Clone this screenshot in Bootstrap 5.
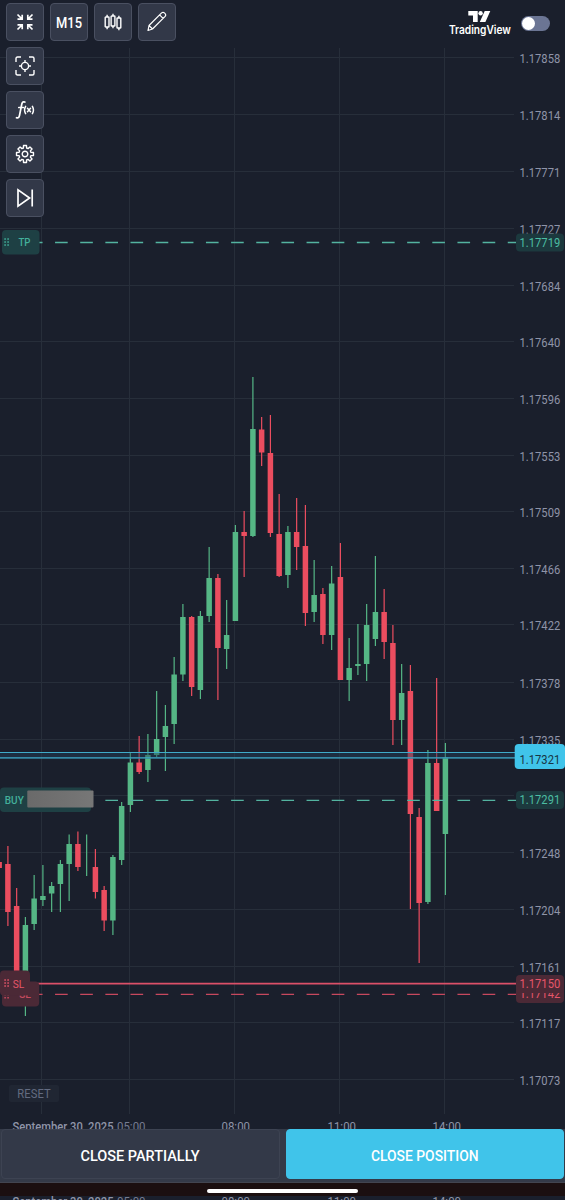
<!DOCTYPE html>
<html lang="en">
<head>
<meta charset="utf-8">
<meta name="viewport" content="width=device-width, initial-scale=1">
<title>Chart</title>
<link href="https://cdn.jsdelivr.net/npm/bootstrap@5.3.0/dist/css/bootstrap.min.css" rel="stylesheet">
<style>
  body { background:#1a1f2c; font-family:Roboto,"Liberation Sans",sans-serif; height:1200px; }
  .chart-area { height:1129px; }
  .chart-area > svg, .plot { display:block; }
  text { font-family:Roboto,"Liberation Sans",sans-serif; }
  .tools { top:3px; left:6px; right:0; }
  .tool { width:38px; height:38px; background:#323848; border:1px solid #4a5061; border-radius:4px; color:#fff; font-size:14.5px; font-weight:500; }
  .tool:hover { background:#3a4152; color:#fff; }
  .tool-gap { gap:6px; }
  .brand { margin-left:272px; width:64px; margin-top:6px; }
  .switch-track { width:29px; height:15px; border-radius:8px; background:#6b7594; margin:13px 0 0 9px; padding:1px; }
  .switch-knob { width:13px; height:13px; border-radius:50%; background:#fff; }
  .reset { left:8.5px; top:1085px; width:50px; height:17px; background:#202633; color:#636b80; font-size:11.5px; line-height:17px; border-radius:2px; letter-spacing:.1px; }
  .actions { height:54px; background:#343a48; padding:0 1px 3px; gap:6px; border-bottom:1px solid #424550; }
  .action { height:50px; border-radius:4px; border:1px solid #3d4352; background:#333948; color:#fff; flex:1 1 0; }
  .action.primary { background:#40c4ea; border-color:#40c4ea; }
  .home { height:13px; background:#1b0f10; padding-top:6px; }
  .home-bar { width:151px; height:4px; border-radius:2px; background:#fff; }
  .under { height:4px; }
</style>
</head>
<body class="m-0 overflow-hidden d-flex flex-column">
<main class="chart-area position-relative overflow-hidden flex-shrink-0">
  <svg id="plot" width="565" height="1130" viewBox="0 0 565 1130" role="img" aria-label="Candlestick chart"></svg>

  <div class="tools position-absolute d-flex flex-column tool-gap">
    <div class="d-flex align-items-start">
      <div class="d-flex tool-gap">
        <button class="tool btn p-0 d-flex align-items-center justify-content-center" aria-label="Collapse">
          <svg width="18" height="18" viewBox="0 0 18 18" fill="none" stroke="#fff" stroke-width="1.7"><path d="M1.5 1.5 6 6M1.5 6.2H6.2V1.7M16.5 1.5 12 6M11.8 1.7V6.2H16.5M1.5 16.5 6 12M1.5 11.8H6.2V16.3M16.5 16.5 12 12M11.8 16.3V11.8H16.5"/></svg>
        </button>
        <button class="tool btn p-0 d-flex align-items-center justify-content-center"><svg width="28" height="16" fill="#fff"><text x="1" y="13.5" font-size="15" font-weight="500" textLength="26" lengthAdjust="spacingAndGlyphs">M15</text></svg></button>
        <button class="tool btn p-0 d-flex align-items-center justify-content-center" aria-label="Candles">
          <svg width="20" height="18" viewBox="0 0 20 18" fill="none" stroke="#fff" stroke-width="1.4"><rect x="2.2" y="4" width="3.8" height="10" rx=".6"/><rect x="8.1" y="3" width="3.8" height="10" rx=".6"/><rect x="14" y="5" width="3.8" height="10" rx=".6"/><path d="M4.1 1.7V4M4.1 14V16.3M10 .7V3M10 13V15.3M15.9 2.7V5M15.9 15V17.3"/></svg>
        </button>
        <button class="tool btn p-0 d-flex align-items-center justify-content-center" aria-label="Draw">
          <svg width="22" height="22" viewBox="0 0 22 22" fill="none" stroke="#fff" stroke-width="1.2" stroke-linejoin="round"><path d="M2 19.5 3 14.5 15.6 1.9Q17 .7 18.4 1.9L19.1 2.6Q20.3 4 19.1 5.4L6.5 18ZM3 14.5 6.5 18M13.6 3.9 17.1 7.4"/></svg>
        </button>
      </div>
      <div class="brand">
        <svg width="64" height="28" viewBox="0 0 64 28" fill="#fff"><path d="M20.3 2H29.7V13H25V6.4H20.3ZM36.7 2H42.3L37.4 13H31.8Z"/><circle cx="32.6" cy="4.2" r="2.2"/><text x=".9" y="24.8" font-size="11.4" font-weight="600" textLength="62" lengthAdjust="spacingAndGlyphs" style="font-family:Inter,sans-serif">TradingView</text></svg>
      </div>
      <div class="switch-track" role="switch" aria-checked="false"><div class="switch-knob"></div></div>
    </div>
    <button class="tool btn p-0 d-flex align-items-center justify-content-center" aria-label="Crosshair">
      <svg width="20" height="20" viewBox="0 0 20 20" fill="none" stroke="#fff" stroke-width="1.4"><path d="M1 6V2.5Q1 1 2.5 1H6M14 1H17.5Q19 1 19 2.5V6M19 14V17.5Q19 19 17.5 19H14M6 19H2.5Q1 19 1 17.5V14M10 4V6.5M10 13.5V16M4 10H6.5M13.5 10H16"/><circle cx="10" cy="10" r="3.6"/></svg>
    </button>
    <button class="tool btn p-0 d-flex align-items-center justify-content-center" aria-label="Indicators">
      <svg width="20" height="20" viewBox="0 0 20 20" fill="none" stroke="#fff" stroke-width="1.7" stroke-linecap="round"><path d="M9.8 2.1Q7.6 1 6.8 4L4.5 15.5Q3.9 18.6 1.5 17.7M3.8 7.5H8.4"/><path stroke-width="1.5" d="M10.6 6.3Q8.5 10 10.6 13.7M17.4 6.3Q19.5 10 17.4 13.7M12.5 8.3 15.5 11.8M15.5 8.3 12.5 11.8"/></svg>
    </button>
    <button class="tool btn p-0 d-flex align-items-center justify-content-center" aria-label="Settings">
      <svg width="20" height="20" viewBox="-10 -10 20 20" fill="none" stroke="#fff" stroke-width="1.4" stroke-linejoin="round"><path id="gear"/><circle r="2.8"/></svg>
    </button>
    <button class="tool btn p-0 d-flex align-items-center justify-content-center" aria-label="Next">
      <svg width="18" height="20" viewBox="0 0 18 20" fill="none" stroke="#fff" stroke-width="1.7"><path d="M2 1.8V18.2L13.6 10ZM16.2 1.5V18.5"/></svg>
    </button>
  </div>
  <button class="reset btn border-0 p-0 position-absolute"><svg class="plot" width="50" height="17" fill="#636b80"><text x="8.3" y="12.5" font-size="12" textLength="33.5" lengthAdjust="spacingAndGlyphs">RESET</text></svg></button>
</main>

<footer class="flex-shrink-0">
  <div class="actions d-flex">
    <button class="action btn p-0"><svg width="122" height="18" fill="#fff"><text x="1.5" y="14.5" font-size="15" font-weight="500" textLength="119" lengthAdjust="spacingAndGlyphs">CLOSE PARTIALLY</text></svg></button>
    <button class="action primary btn p-0"><svg width="110" height="18" fill="#fff"><text x="1" y="14.5" font-size="15" font-weight="500" textLength="107.5" lengthAdjust="spacingAndGlyphs">CLOSE POSITION</text></svg></button>
  </div>
  <div class="home d-flex justify-content-center"><div class="home-bar"></div></div>
  <div class="under overflow-hidden"><svg id="under" class="plot" width="565" height="20"></svg></div>
</footer>

<script src="https://cdn.jsdelivr.net/npm/bootstrap@5.3.0/dist/js/bootstrap.bundle.min.js"></script>
<script>
  const UP = '#55b685', DOWN = '#eb4d5f', MUTED = '#8f94a8';
  // wick top, wick bottom, body top, body bottom, direction
  const candles = [
    [862,868,862,868,0],[846,926,864,912,0],[888,990,906,985,0],[917,1016,925,978,1],[875,930,898.5,924,1],
    [865,906,896,900,1],[882,912,886,893.5,1],[860,912,864,884,1],[834.5,901,844,864,1],[831.5,871,844,867,0],
    [834.5,876,840,840,1],[849,898.5,867,892,0],[886,931,890,920.5,0],[855,935,857,920.5,1],[802,865,806,860,1],
    [753,812,762.5,805,1],[736,774,762.5,772,0],[734,782,755,770,1],[691,757,739,755,1],[705,771,726,737,1],
    [657,744,674.5,724,1],[604,681,617,674.5,1],[616,696,617,687,0],[611,699,616,690,1],[547,622,578,616,1],
    [574,700,578,648,0],[600,669,635,649,1],[525,621,532,621,1],[511,577,532,536,0],[377,537,429,536,1],
    [417,466,429.5,452.5,0],[415,537,453,533,0],[494,577,534,576,0],[526,588,532,575,1],[498,570,532,547,0],
    [505,626,546,613,0],[560,622,595,612,1],[588,644,594,635,0],[566,650,583.5,635,1],[543,680,577,680,0],
    [638,701,668,680,1],[624,675,664,666,1],[604,681,625,664,1],[556,646,612,639,1],[589,659,612,642,0],
    [625,745,643,720,0],[664,745,693,720,1],[665,909,691,814,0],[808,963,817,903,0],[750,904,763,902,1],
    [678,811,763,811,0],[743,895,757.5,834,1]];
  const prices = ['1.17858','1.17814','1.17771','1.17727','1.17684','1.17640','1.17596','1.17553','1.17509','1.17466','1.17422','1.17378','1.17335','','1.17248','1.17204','1.17161','1.17117','1.17073'];
  const rows = [57.5,114.5,171.5,228.5,285.5,341.5,398.5,455.5,511.5,568.5,624.5,682.5,739.5,795.5,852.5,909.5,966.5,1022.5,1079.5];
  const cols = [41.5,129.5,234.5,339.5,444.5];
  const text = (s, x, y, w, c, size = 12, weight = 400) =>
    `<text x="${x}" y="${y}" fill="${c}" font-size="${size}" font-weight="${weight}" textLength="${w}" lengthAdjust="spacingAndGlyphs">${s}</text>`;
  const price = (s, y, c) => text(s, 519.6, y, 40.6, c, 12.3);
  const box = (x, y, w, h, c, r = 4) => `<rect x="${x}" y="${y}" width="${w}" height="${h}" rx="${r}" fill="${c}"/>`;
  const dash = (x, y, c) => `<path d="M${x} ${y}H516" stroke="${c}" stroke-width="1.3" stroke-dasharray="12.65 12.5"/>`;
  const grip = (x, y, c) => [0,1,2].map(i => box(x, y + i*3, 1.6, 1.6, c, .3) + box(x + 3, y + i*3, 1.6, 1.6, c, .3)).join('');
  let s = '';
  rows.forEach(y => s += `<path d="M0 ${y}H514" stroke="#272e3a"/>`);
  cols.forEach(x => s += `<path d="M${x} 48V1114" stroke="#272e3a"/>`);
  candles.forEach((c, i) => {
    const x = 445.4 - (candles.length - 1 - i) * 8.75, col = c[4] ? UP : DOWN;
    s += `<path d="M${x} ${c[0]}V${c[1]}" stroke="${col}" stroke-width="1.2"/>`;
    if (c[3] > c[2]) s += `<rect x="${x-2.75}" y="${c[2]}" width="5.5" height="${c[3]-c[2]}" fill="${col}"/>`;
  });
  prices.forEach((p, i) => { if (p) s += price(p, rows[i] + 5.6, MUTED); });
  s += '<rect y="752" width="516" height="7" fill="#21405a" opacity=".45"/>';
  s += '<path d="M0 752.5H516M0 757.8H516" stroke="#3fabc9" stroke-width="1.2"/>';
  s += dash(29.9, 242.5, '#53b3a0') + dash(105.35, 800.3, '#53b3a0') + dash(29.9, 994.4, '#c8485e');
  s += '<path d="M28 983.7H516" stroke="#dc5068" stroke-width="1.8"/>';
  // order labels on the left
  s += box(2,230,37.5,24.5,'#1e4044') + grip(4.3,238.2,'#43b09b') + text('TP',18.5,246,12,'#43b09b',10.5,500);
  s += box(0,787.5,91,24.5,'#1e4044') + text('BUY',4.8,803.8,19,'#43b09b',11,500);
  s += '<defs><linearGradient id="mask"><stop stop-color="#6a6a6a"/><stop offset="1" stop-color="#777"/></linearGradient></defs>' + box(27.3,790.5,66.2,17,'url(#mask)',1);
  s += box(2,981.5,37.2,25,'#4b2936') + grip(4.3,991,'#c64b5e') + text('SL',19,998,12,'#c64b5e',10.5,500);
  s += box(0,970.5,30,25,'#4b2936') + grip(4.3,979.2,'#e5566a') + text('SL',12.7,988,11.5,'#e5566a',11.5);
  // order labels on the price axis
  s += box(516,233.5,48,18,'#1c393e') + price('1.17719',246.6,'#4cbda3');
  s += box(514.7,744,50.3,25,'#40c4ea') + price('1.17321',763.5,'#183544');
  s += box(516,791,48,18,'#1c393e') + price('1.17291',804.2,'#4cbda3');
  s += box(516,985,48,18,'#4b2936') + price('1.17142',998,'#e5566a');
  s += box(516,975,48,18,'#4b2936') + price('1.17150',987.8,'#e5566a');
  const times = y => text('September 30, 2025',12.5,y,101,MUTED,12,500) + text('05:00',117,y,28.5,'#767c91') +
    text('08:00',221.5,y,28.5,MUTED) + text('11:00',327.5,y,28.5,MUTED) + text('14:00',432.5,y,28.5,MUTED);
  document.getElementById('plot').innerHTML = s + times(1131);
  document.getElementById('under').innerHTML = times(10);
  // eight-tooth gear outline
  let g = '';
  for (let i = 0; i < 8; i++) [[-15,6.2],[-10,8.6],[10,8.6],[15,6.2]].forEach(([a, r]) => {
    const t = (i*45 + a) * Math.PI / 180;
    g += (g ? 'L' : 'M') + (Math.sin(t)*r).toFixed(2) + ' ' + (-Math.cos(t)*r).toFixed(2);
  });
  document.getElementById('gear').setAttribute('d', g + 'Z');
</script>
</body>
</html>
